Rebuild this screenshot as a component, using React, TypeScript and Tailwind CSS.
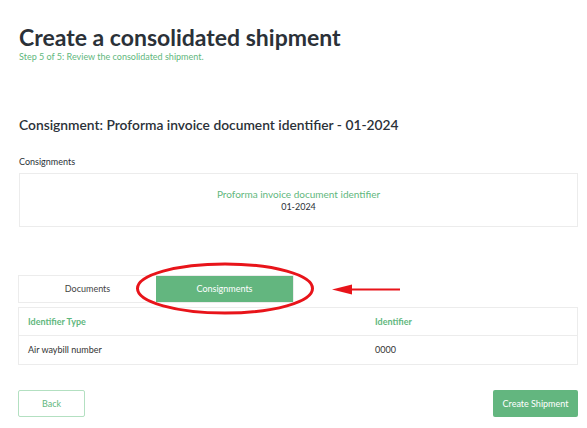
import React from "react";

export default function App() {
  return (
    <div className="relative w-[587px] h-[428px] bg-white overflow-hidden text-[#2f343b]" style={{ fontFamily: "Lato, 'Open Sans', sans-serif" }}>
      <div className="pl-[19px] pr-[9px] pt-[23px]">
        <h1 className="text-[23px] font-bold leading-[28px] text-[#2b3138]">Create a consolidated shipment</h1>
        <p className="mt-[0px] text-[9px] leading-[12px] text-[#5fb77d]">Step 5 of 5: Review the consolidated shipment.</p>

        <h2 className="mt-[52px] text-[13.8px] font-semibold leading-[20px] text-[#2b3138]">Consignment: Proforma invoice document identifier - 01-2024</h2>

        <p className="mt-[21px] text-[9px] leading-[12px] text-[#2b3138]">Consignments</p>
        <div className="mt-[5px] h-[54px] border border-[#ececec] flex flex-col items-center justify-center">
          <span className="text-[10px] leading-[13px] text-[#5fb77d]">Proforma invoice document identifier</span>
          <span className="text-[9px] leading-[12px] text-[#2b3138]">01-2024</span>
        </div>

        <div className="mt-[48px] -ml-px flex w-[276px] h-[28px] border border-[#ececec]">
          <div className="w-[137px] flex items-center justify-center text-[9px] text-[#444]">Documents</div>
          <div className="flex-1 flex items-center justify-center bg-[#63b67f] text-[9px] text-white">Consignments</div>
        </div>

        <div className="mt-[4px] -ml-px border border-[#ececec]">
          <div className="grid grid-cols-[347px_1fr] h-[28px] items-center border-b border-[#ececec] px-[9px] text-[9px] font-bold text-[#5fb77d]">
            <span>Identifier Type</span>
            <span>Identifier</span>
          </div>
          <div className="grid grid-cols-[347px_1fr] h-[28px] items-center px-[9px] text-[9px] text-[#333]">
            <span>Air waybill number</span>
            <span>0000</span>
          </div>
        </div>

        <div className="mt-[25px] -ml-px flex justify-between">
          <button className="w-[67px] h-[27px] border border-[#b3e0c1] rounded-[2px] text-[9px] text-[#5fb77d] bg-white">Back</button>
          <button className="w-[85px] h-[27px] bg-[#63b67f] rounded-[2px] text-[9px] text-white">Create Shipment</button>
        </div>
      </div>

      <svg className="absolute left-0 top-0 pointer-events-none" width="587" height="428">
        <ellipse cx="225" cy="288.5" rx="87.5" ry="24.5" fill="none" stroke="#e8141a" strokeWidth="3" />
        <line x1="345" y1="289.5" x2="400" y2="289.5" stroke="#e8141a" strokeWidth="2" />
        <polygon points="332,289.5 352,284.5 352,294.5" fill="#e8141a" />
      </svg>
    </div>
  );
}
